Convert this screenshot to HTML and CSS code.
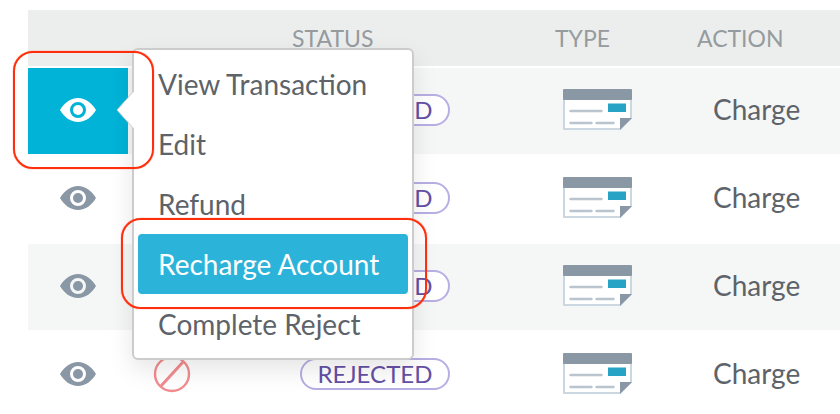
FILE: index.html
```html
<!DOCTYPE html>
<html lang="en">
<head>
<meta charset="utf-8">
<title>Transactions</title>
<link rel="stylesheet" href="styles.css">
</head>
<body>
<svg class="defs" aria-hidden="true">
  <symbol id="eye" viewBox="0 0 36 24">
    <path fill="currentColor" fill-rule="evenodd" d="M0 12C4 5 10.500 0 18 0s14 5 18 12c-4 7-10.500 12-18 12S4 19 0 12zM18 4a8 8 0 1 0 0 16 8 8 0 0 0 0-16z"/>
    <circle cx="18" cy="12" r="5" fill="currentColor"/>
  </symbol>
  <symbol id="check" viewBox="0 0 70 42">
    <path d="M1 2h67v27L57 40H1z" fill="#fff" stroke="#cbd7e1" stroke-width="2"/>
    <rect width="69" height="11" rx="1" fill="#8a97a5"/>
    <path d="M7.500 22h31M7.500 34h21M33.500 34h17" stroke="#b9c4ce" stroke-width="2.400" stroke-linecap="round"/>
    <rect x="45" y="14.500" width="18" height="8.500" fill="#26a3c5"/>
    <path d="M57 29h12L57 41z" fill="#8a97a5"/>
  </symbol>
  <symbol id="ban" viewBox="0 0 38 38">
    <circle cx="19" cy="19" r="17" fill="#fff" stroke="#f38b8e" stroke-width="2.400"/>
    <path d="M8 31 30 7" stroke="#f38b8e" stroke-width="3"/>
  </symbol>
</svg>
<main class="page">
  <table class="grid">
    <thead>
      <tr><th class="col-view"></th><th class="col-flag"></th><th class="col-status">STATUS</th><th class="col-type">TYPE</th><th>ACTION</th></tr>
    </thead>
    <tbody>
      <tr>
        <td class="view active"><button class="eye" aria-label="Open menu"><svg><use href="#eye"/></svg></button></td>
        <td class="flag"><svg><use href="#ban"/></svg></td>
        <td><span class="pill">REJECTED</span></td>
        <td><svg class="check"><use href="#check"/></svg></td>
        <td class="action">Charge</td>
      </tr>
      <tr>
        <td class="view"><button class="eye" aria-label="Open menu"><svg><use href="#eye"/></svg></button></td>
        <td class="flag"><svg><use href="#ban"/></svg></td>
        <td><span class="pill">REJECTED</span></td>
        <td><svg class="check"><use href="#check"/></svg></td>
        <td class="action">Charge</td>
      </tr>
      <tr>
        <td class="view"><button class="eye" aria-label="Open menu"><svg><use href="#eye"/></svg></button></td>
        <td class="flag"><svg><use href="#ban"/></svg></td>
        <td><span class="pill">REJECTED</span></td>
        <td><svg class="check"><use href="#check"/></svg></td>
        <td class="action">Charge</td>
      </tr>
      <tr>
        <td class="view"><button class="eye" aria-label="Open menu"><svg><use href="#eye"/></svg></button></td>
        <td class="flag"><svg><use href="#ban"/></svg></td>
        <td><span class="pill">REJECTED</span></td>
        <td><svg class="check"><use href="#check"/></svg></td>
        <td class="action">Charge</td>
      </tr>
    </tbody>
  </table>
  <div class="menu">
    <svg class="arrow" viewBox="0 0 18 40" aria-hidden="true"><path d="M18 1 1 20l17 19" fill="#fff" stroke="#ccc" stroke-width="1"/></svg>
    <button class="item">View Transaction</button>
    <button class="item">Edit</button>
    <button class="item">Refund</button>
    <button class="item selected">Recharge Account</button>
    <button class="item">Complete Reject</button>
  </div>
  <div class="mark mark-eye"></div>
  <div class="mark mark-item"></div>
</main>
</body>
</html>
```
FILE: styles.css
```css
* { box-sizing: border-box; }
body {
  margin: 0;
  overflow: hidden;
  background: #fff;
  color: #5d6369;
  font: 28px/32px Lato, "Liberation Sans", sans-serif;
}
button { border: 0; background: none; font: inherit; color: inherit; cursor: pointer; }
svg { display: block; }
.defs { position: absolute; width: 0; height: 0; }
.page { position: relative; padding: 8px 0 0 28px; }
.grid { width: 100%; border-collapse: separate; border-spacing: 0 2px; table-layout: fixed; }
th {
  height: 56px;
  padding: 0 0 0 20px;
  background: #eceeed;
  color: #959b9e;
  font-size: 23px;
  font-weight: 400;
  text-align: left;
}
td { height: 86px; padding: 0 0 2px 28px; vertical-align: middle; }
tbody tr:nth-child(odd) { background: #f5f7f6; }
.col-view { width: 100px; }
.col-flag { width: 144px; }
.col-status { width: 263px; }
.col-type { width: 142px; }
.view { padding-left: 0; color: #8a97a5; }
.view.active { background: #00b3d7; color: #fff; }
.eye { display: block; margin: 0 auto; padding: 0; }
.eye svg { width: 36px; height: 24px; }
.flag { padding-left: 25px; }
.flag svg { width: 38px; height: 38px; }
.pill {
  display: block;
  width: 150px;
  height: 32px;
  border: 2px solid #b9aee3;
  border-radius: 16px;
  background: #fff;
  color: #6450a5;
  font-size: 24px;
  line-height: 28px;
  text-align: center;
}
.check { width: 70px; height: 42px; }
.action { padding: 0 0 4px 36px; }
.menu {
  position: absolute;
  top: 48px;
  left: 132px;
  width: 282px;
  padding: 4px;
  border: 2px solid #ccc;
  border-radius: 6px;
  background: #fff;
  box-shadow: 0 10px 24px rgba(0, 0, 0, 0.1);
}
.arrow { position: absolute; top: 40px; left: -18px; width: 18px; height: 40px; }
.item {
  display: block;
  width: 100%;
  height: 60px;
  padding: 0 0 0 20px;
  border-radius: 4px;
  text-align: left;
}
.item.selected { background: #2bb3d9; color: #fff; }
.mark {
  position: absolute;
  border: 2px solid #ff2f0e;
  border-radius: 20px;
  box-shadow: 0 0 1px #ff2f0e;
  pointer-events: none;
}
.mark-eye { top: 51px; left: 13px; width: 141px; height: 118px; }
.mark-item { top: 218px; left: 121px; width: 306px; height: 91px; }
```
